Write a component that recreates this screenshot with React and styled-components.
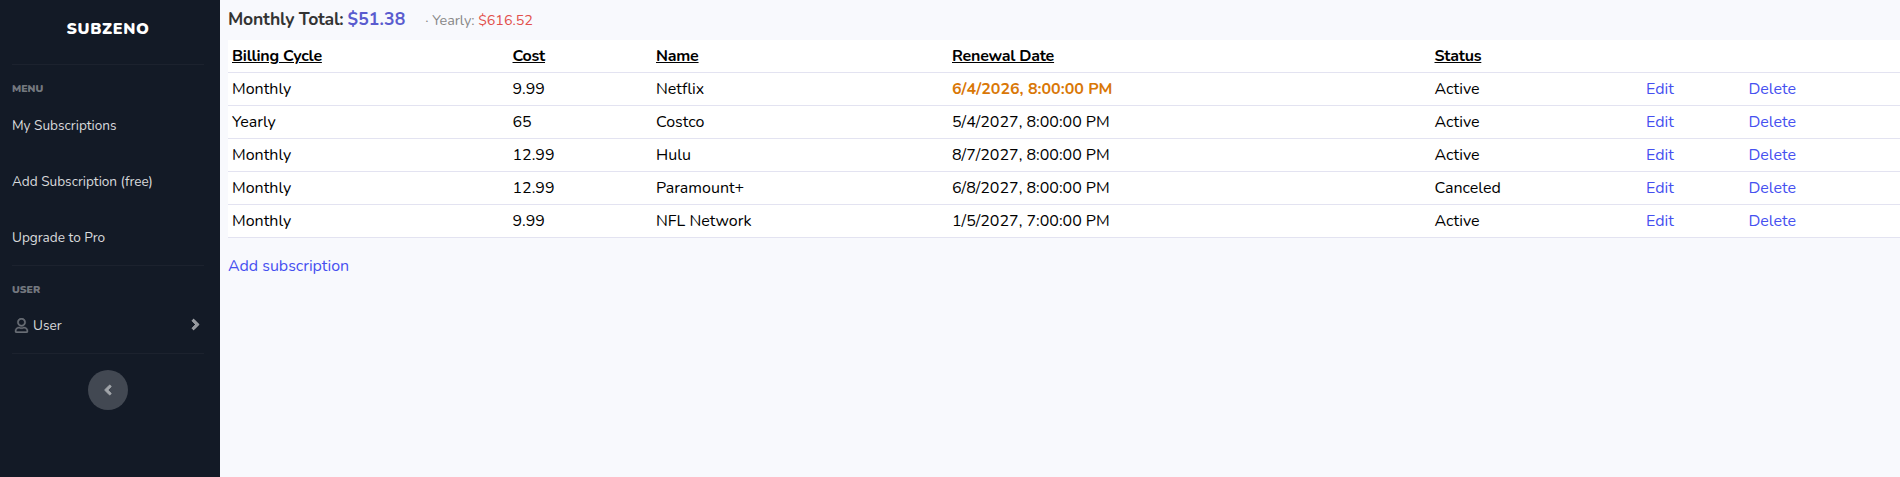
import React from "react";
import styled, { createGlobalStyle } from "styled-components";
import { FaRegUser, FaAngleRight, FaAngleLeft } from "react-icons/fa";

const colors = {
  sidebar: "#131a26",
  page: "#f8f9fd",
  white: "#fff",
  link: "#4650f0",
  border: "#e3e3f1",
};

const menu = ["My Subscriptions", "Add Subscription (free)", "Upgrade to Pro"];

const headings = ["Billing Cycle", "Cost", "Name", "Renewal Date", "Status"];

const columns = ["280.5px", "143.5px", "296px", "482.5px", "211.5px", "102.5px", "155.5px"];

const subscriptions = [
  { cycle: "Monthly", cost: "9.99", name: "Netflix", date: "6/4/2026, 8:00:00 PM", status: "Active", soon: true },
  { cycle: "Yearly", cost: "65", name: "Costco", date: "5/4/2027, 8:00:00 PM", status: "Active" },
  { cycle: "Monthly", cost: "12.99", name: "Hulu", date: "8/7/2027, 8:00:00 PM", status: "Active" },
  { cycle: "Monthly", cost: "12.99", name: "Paramount+", date: "6/8/2027, 8:00:00 PM", status: "Canceled" },
  { cycle: "Monthly", cost: "9.99", name: "NFL Network", date: "1/5/2027, 7:00:00 PM", status: "Active" },
];

const GlobalStyle = createGlobalStyle`
  * {
    box-sizing: border-box;
  }
  body {
    margin: 0;
    background: ${colors.page};
    font-family: Nunito, Lato, "Open Sans", sans-serif;
    font-size: 16px;
    line-height: 24px;
    color: #000;
  }
  a {
    text-decoration: none;
  }
`;

const Wrapper = styled.div`
  display: flex;
  height: 100vh;
  overflow: hidden;
`;

const SidebarSec = styled.aside`
  flex: 0 0 220px;
  padding: 0 16px 0 12px;
  background: ${colors.sidebar};
`;

const Brand = styled.h1`
  display: flex;
  align-items: center;
  justify-content: center;
  height: 64px;
  margin: 0;
  padding-bottom: 7px;
  font-size: 16px;
  font-weight: 900;
  letter-spacing: 0.65px;
  color: ${colors.white};
`;

const Divider = styled.hr`
  height: 1px;
  margin: 0;
  border: 0;
  background: rgba(255, 255, 255, 0.04);
`;

const SectionTitle = styled.h2`
  margin: 0;
  padding-top: 16px;
  font-size: 10.4px;
  line-height: 16px;
  font-weight: 900;
  text-transform: uppercase;
  color: rgba(255, 255, 255, 0.43);
`;

const MenuLink = styled.a`
  display: flex;
  align-items: center;
  height: 56px;
  font-size: 13.6px;
  color: rgba(255, 255, 255, 0.85);
`;

const MenuLinks = styled.nav`
  ${MenuLink} {
    padding-top: 2px;
  }
`;

const UserIcon = styled(FaRegUser)`
  margin: -1px 4.5px 0 1.5px;
  color: rgba(255, 255, 255, 0.33);
  stroke: currentColor;
  stroke-width: 12px;
`;

const ArrowIcon = styled(FaAngleRight)`
  margin: -2px 0 0 auto;
  color: rgba(255, 255, 255, 0.55);
  stroke: currentColor;
  stroke-width: 20px;
`;

const ToggleButton = styled.button`
  display: flex;
  align-items: center;
  justify-content: center;
  width: 40px;
  height: 40px;
  margin: 16px auto 0;
  padding: 0 1px 0 0;
  border: 0;
  border-radius: 50%;
  background: #424852;
  color: #a1a5aa;

  svg {
    stroke: currentColor;
    stroke-width: 24px;
  }
`;

const UserSection = styled.section`
  ${MenuLink} {
    height: 55px;
  }
`;

const Content = styled.main`
  flex: 1;
  min-width: 0;
  padding-left: 8px;
`;

const Totals = styled.div`
  display: flex;
  align-items: baseline;
  height: 40px;
  padding-top: 7px;
  font-size: 17.6px;
  font-weight: 700;
  letter-spacing: -0.2px;
  color: #333;
`;

const MonthlyAmount = styled.span`
  margin-left: 4px;
  letter-spacing: 0.1px;
  color: #5a5ccf;
`;

const Yearly = styled.small`
  margin-left: 20px;
  font-size: 14.4px;
  font-weight: 400;
  letter-spacing: -0.05px;
  color: #888;
`;

const YearlyAmount = styled.span`
  color: #e2504c;
`;

const Table = styled.table`
  width: 100%;
  table-layout: fixed;
  border-collapse: separate;
  border-spacing: 0;
  background: ${colors.white};
`;

const Col = styled.col`
  width: ${({ $width }) => $width};
`;

const Cell = styled.td`
  height: 33px;
  padding: 4px;
  border-bottom: 1px solid ${colors.border};
  text-align: left;
  font-weight: ${({ $soon }) => ($soon ? 700 : 400)};
  color: ${({ $soon }) => ($soon ? "#d97706" : "#000")};
`;

const HeadCell = styled(Cell)`
  font-weight: 700;
  letter-spacing: -0.22px;
  text-decoration: underline;
`;

const ActionLink = styled.a`
  letter-spacing: -0.03px;
  color: ${colors.link};
`;

const Footer = styled.div`
  padding-top: 16px;
`;

const Sidebar = () => {
  return (
    <SidebarSec>
      <Brand>SUBZENO</Brand>
      <Divider />
      <SectionTitle>Menu</SectionTitle>
      <MenuLinks>
        {menu.map((item) => (
          <MenuLink key={item} href="#">{item}</MenuLink>
        ))}
      </MenuLinks>
      <Divider />
      <UserSection>
        <SectionTitle>User</SectionTitle>
        <MenuLink href="#">
          <UserIcon size={15} />
          User
          <ArrowIcon size={17} />
        </MenuLink>
      </UserSection>
      <Divider />
      <ToggleButton aria-label="Collapse sidebar">
        <FaAngleLeft size={16} />
      </ToggleButton>
    </SidebarSec>
  );
};

const SubscriptionTable = () => {
  return (
    <Table>
      <colgroup>
        {columns.map((width, index) => (
          <Col key={index} $width={width} />
        ))}
      </colgroup>
      <thead>
        <tr>
          {headings.map((heading) => (
            <HeadCell as="th" key={heading}>{heading}</HeadCell>
          ))}
          <HeadCell as="th" />
          <HeadCell as="th" />
        </tr>
      </thead>
      <tbody>
        {subscriptions.map(({ cycle, cost, name, date, status, soon }) => (
          <tr key={name}>
            <Cell>{cycle}</Cell>
            <Cell>{cost}</Cell>
            <Cell>{name}</Cell>
            <Cell $soon={soon}>{date}</Cell>
            <Cell>{status}</Cell>
            <Cell><ActionLink href="#">Edit</ActionLink></Cell>
            <Cell><ActionLink href="#">Delete</ActionLink></Cell>
          </tr>
        ))}
      </tbody>
    </Table>
  );
};

const App = () => {
  return (
    <Wrapper>
      <GlobalStyle />
      <Sidebar />
      <Content>
        <Totals>
          Monthly Total: <MonthlyAmount>$51.38</MonthlyAmount>
          <Yearly>· Yearly: <YearlyAmount>$616.52</YearlyAmount></Yearly>
        </Totals>
        <SubscriptionTable />
        <Footer>
          <ActionLink href="#">Add subscription</ActionLink>
        </Footer>
      </Content>
    </Wrapper>
  );
};

export default App;
